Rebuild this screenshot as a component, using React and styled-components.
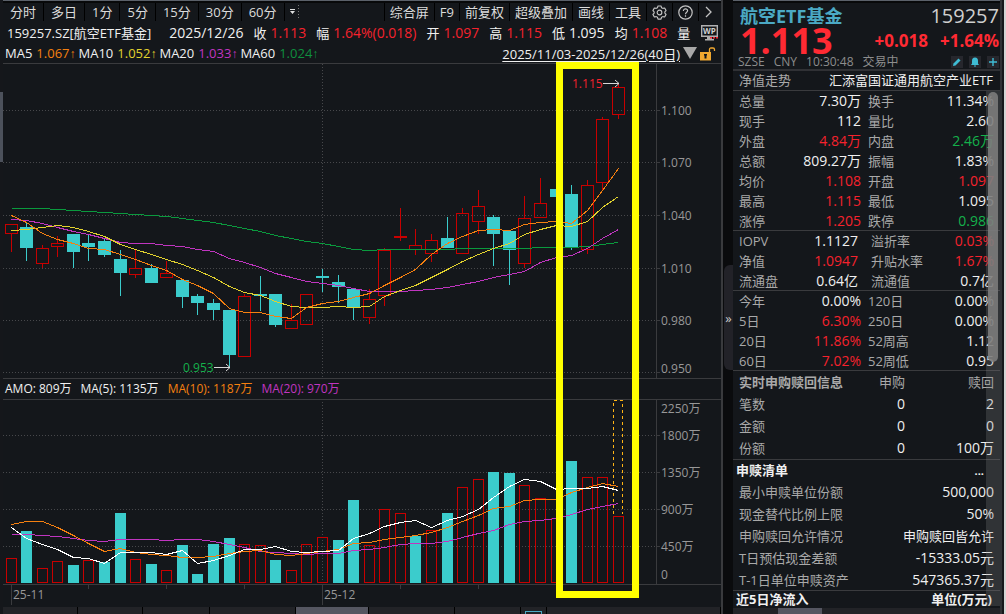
import React from 'react';
import styled, { createGlobalStyle } from 'styled-components';

const RED = '#f5222d';
const GREEN = '#14b14b';
const CYAN = '#3bcccc';
const ORANGE = '#f58010';
const YELLOW = '#e2d22e';
const PURPLE = '#c035c0';
const WHITE = '#f0f0f0';
const GREY = '#a9a9a9';
const LINE = '#3a3b3e';

const GlobalStyle = createGlobalStyle`
  * { box-sizing: border-box; }
  body {
    margin: 0;
    background: #0a0b0d;
    color: ${WHITE};
    font-family: "Open Sans", "Noto Sans CJK SC", sans-serif;
    font-size: 13px;
  }
  button {
    font: inherit;
    color: inherit;
    padding: 0;
    border: 0;
    background: none;
  }
`;

const Page = styled.div`
  display: flex;
  min-height: 100vh;
  overflow: hidden;
`;
const LeftRail = styled.div`
  width: 3px;
  padding-top: 92px;
  background: #15171b;
`;
const RailThumb = styled.div`
  height: 70px;
  background: #4c515b;
`;
const Main = styled.main`
  flex: 1;
  min-width: 0;
  display: flex;
  flex-direction: column;
  background: #14171b;
  border-top: 1px solid #5b616a;
`;
const Toolbar = styled.nav`
  display: flex;
  height: 21px;
  padding-bottom: 1px;
  border-top: 2px solid #08090a;
`;
const ToolGroup = styled.div`
  display: flex;
  margin-left: ${(p) => (p.$end ? 'auto' : '0')};
  padding-right: ${(p) => (p.$end ? 3 : 0)}px;
`;
const ToolButton = styled.button`
  display: flex;
  align-items: center;
  justify-content: center;
  padding: 0 ${(p) => (p.$tight ? 5 : 7)}px;
  line-height: 18px;
  color: #dcdcdc;
  border-left: 1px solid #000;
  white-space: nowrap;
  &:first-child { border-left-width: ${(p) => (p.$tight ? 1 : 0)}px; }
`;
const QuoteLine = styled.div`
  display: flex;
  align-items: center;
  height: 22px;
  padding: 0 3px 0 4px;
  gap: 10px;
  line-height: 22px;
  white-space: nowrap;
`;
const QuoteName = styled.span`
  margin-right: 8px;
`;
const Quote = styled.span`
  display: flex;
  gap: 4px;
`;
const Num = styled.span`
  font-size: 14px;
  color: ${(p) => p.$color || WHITE};
`;
const WpButton = styled.button`
  display: flex;
  margin-left: auto;
`;
const MaLine = styled.div`
  display: flex;
  align-items: center;
  height: 19px;
  padding: 0 5px 0 2px;
  gap: 3px;
  line-height: 19px;
  white-space: nowrap;
`;
const MaItem = styled.span`
  display: flex;
  gap: 4px;
`;
const MaValue = styled.span`
  color: ${(p) => p.$color};
`;
const Arrow = styled.span`
  font-family: "Liberation Sans", sans-serif;
  font-size: 12px;
`;
const RangeButton = styled.button`
  margin-left: auto;
  line-height: 16px;
  text-decoration: underline;
  text-underline-offset: 2px;
`;
const Charts = styled.section`
  position: relative;
`;
const Plot = styled.svg`
  display: block;
  width: 100%;
  height: auto;
`;
const AmoLine = styled.div`
  display: flex;
  height: 20px;
  padding-left: 2px;
  gap: 9px;
  font-size: 12px;
  line-height: 20px;
  white-space: nowrap;
`;
const Highlight = styled.div`
  position: absolute;
  top: -1px;
  bottom: 9px;
  left: 77%;
  width: 83px;
  border: 7px solid #ffff00;
`;
const Tabs = styled.div`
  display: flex;
  flex: 1;
  min-height: 7px;
  background: #222327;
`;
const Tab = styled.div`
  flex: ${(p) => p.$size};
  display: flex;
  justify-content: center;
  padding-top: 4px;
  background: ${(p) => (p.$active ? '#555661' : '#222327')};
  border-right: 1px solid #000;
`;
const TabIcon = styled.span`
  width: 17px;
  border: 1px solid #4ba9c4;
  border-bottom: 0;
`;

const Splitter = styled.div`
  width: 12px;
  display: flex;
  padding-top: 265px;
  padding-left: 1px;
  background: #0a0b0d;
  border-left: 2px solid #393a3d;
`;
const Collapse = styled.button`
  width: 100%;
  height: 105px;
  background: #222228;
  color: #c8c8c8;
  border-radius: 6px 0 0 6px;
  line-height: 104px;
`;

const Side = styled.aside`
  width: 267px;
  display: flex;
  flex-direction: column;
  background: #14171b;
  border-top: 1px solid #5b616a;
`;
const SideHead = styled.header`
  height: 70px;
  padding: 2px 1px 0 7px;
  border-top: 2px solid #08090a;
  border-bottom: 2px solid #303135;
  white-space: nowrap;
`;
const HeadRow = styled.div`
  display: flex;
  justify-content: space-between;
  align-items: center;
  height: ${(p) => p.$h}px;
  line-height: ${(p) => p.$h}px;
`;
const Name = styled.h1`
  margin: 0;
  font-size: 18px;
  color: #4ba9c4;
`;
const Code = styled.span`
  font-size: 20px;
  color: #cfcfcf;
`;
const Price = styled.strong`
  font-size: 36px;
  color: #ff2a33;
`;
const Changes = styled.strong`
  display: flex;
  gap: 12px;
  font-size: 17px;
  color: #ff2a33;
`;
const Status = styled.span`
  display: flex;
  gap: 9px;
  margin-left: -2px;
  font-size: 12px;
  color: #8d8d8d;
`;
const Actions = styled.span`
  display: flex;
  gap: 6px;
`;
const ActionButton = styled.button`
  display: flex;
  width: 12px;
  height: 12px;
  background: #26272d;
`;
const SideBody = styled.div`
  position: relative;
`;
const TrendRow = styled.div`
  display: flex;
  justify-content: space-between;
  height: 20px;
  padding: 0 7px 0 6px;
  line-height: 19px;
  color: ${WHITE};
  border-bottom: 1px solid ${LINE};
  white-space: nowrap;
`;
const Label = styled.span`
  color: ${GREY};
`;
const Section = styled.section`
  padding: 0 6px;
  border-bottom: ${(p) => (p.$last ? 0 : 1)}px solid ${LINE};
`;
const SectionTitle = styled.h2`
  display: flex;
  justify-content: space-between;
  margin: 0 0 0 -3px;
  padding-right: ${(p) => p.$inset || 0}px;
  font-size: 13px;
  line-height: ${(p) => p.$h || 20}px;
`;
const Dots = styled.button`
  font-size: 11px;
  line-height: 18px;
`;
const DataTable = styled.table`
  width: 100%;
  table-layout: ${(p) => (p.$auto ? 'auto' : 'fixed')};
  border-spacing: 0;
  white-space: nowrap;
  tr { height: ${(p) => p.$row}px; }
  tr:last-child { height: ${(p) => p.$lastRow || p.$row}px; }
`;
const Th = styled.th`
  width: ${(p) => (p.$w ? p.$w + 'px' : 'auto')};
  padding: 0 0 0 ${(p) => p.$indent || 0}px;
  text-align: ${(p) => (p.$right ? 'right' : 'left')};
  font-weight: ${(p) => (p.$bold ? 700 : 400)};
  line-height: 18px;
  color: ${GREY};
`;
const Td = styled.td`
  width: ${(p) => (p.$w ? p.$w + 'px' : 'auto')};
  padding: 0 ${(p) => p.$inset || 0}px 0 0;
  text-align: right;
  font-size: 14px;
  line-height: 18px;
  color: ${(p) => p.$color || WHITE};
`;
const CjkTd = styled(Td)`
  font-size: 13px;
`;
const Track = styled.div`
  position: absolute;
  top: 20px;
  right: 0;
  bottom: 2px;
  width: 14px;
  padding: 1px 2px;
  background: rgba(130, 130, 130, 0.26);
`;
const Thumb = styled.div`
  height: 270px;
  border-radius: 5px;
  background: rgba(125, 125, 125, 0.88);
`;
const SideFoot = styled.div`
  flex: 1;
  min-height: 7px;
  padding-left: 45px;
  background: #222327;
`;
const FootThumb = styled.div`
  width: 44px;
  height: 100%;
  background: #555661;
`;
const Edge = styled.div`
  width: 6px;
  background: #17181b;
  border-left: 2px solid #303135;
  border-right: 2px solid #d4d4d4;
`;

// x centre of the i-th trading day
const cx = (i) => Math.floor(11.1 + 15.57 * i) + 0.5;

// high, body top, body bottom, low, rising
const candles = [
  [224, 224, 234, 252, 1], [223, 227, 248, 261, 0], [245, 248, 264, 268, 1], [236, 243, 247, 257, 1],
  [234, 234, 252, 268, 0], [235, 243, 247, 261, 0], [238, 241, 255, 257, 0], [250, 259, 273, 296, 0],
  [250, 268, 275, 278, 1], [264, 268, 283, 283, 0], [261, 273, 278, 278, 1], [280, 280, 297, 308, 0],
  [294, 296, 303, 315, 0], [299, 303, 310, 320, 0], [310, 310, 355, 368, 0], [294, 296, 357, 357, 1],
  [276, 294, 296, 311, 0], [294, 294, 325, 327, 0], [304, 320, 329, 329, 1], [294, 294, 325, 325, 1],
  [269, 276, 278, 292, 0], [275, 282, 287, 303, 0], [289, 289, 308, 320, 0], [289, 299, 318, 324, 1],
  [248, 250, 296, 306, 1], [208, 236, 238, 241, 1], [229, 245, 250, 255, 1], [234, 240, 254, 262, 1],
  [217, 238, 248, 248, 0], [208, 213, 254, 254, 1], [190, 206, 222, 234, 1], [215, 217, 234, 266, 0],
  [231, 231, 250, 285, 0], [196, 218, 264, 268, 1], [178, 203, 218, 218, 1], [189, 189, 197, 197, 0],
  [185, 194, 248, 250, 0], [180, 185, 250, 254, 1], [117, 119, 183, 191, 1], [84, 87, 115, 119, 1],
];

const priceLines = [
  ['#0a9a3e', [208, 208, 208, 209, 210, 211, 212, 213, 214, 215, 216, 218, 220, 222, 225, 228, 231, 235, 238, 241, 243, 246, 249, 250, 249, 249, 249, 249, 249, 248, 248, 248, 248, 248, 247, 247, 247, 246, 244, 242]],
  [PURPLE, [219, 220, 223, 227, 231, 234, 238, 242, 243, 243, 245, 246, 249, 251, 258, 262, 267, 273, 277, 281, 283, 285, 288, 291, 291, 291, 290, 289, 287, 284, 281, 277, 274, 271, 262, 257, 255, 248, 238, 229]],
  [YELLOW, [230, 229, 227, 225, 227, 231, 236, 244, 249, 254, 259, 264, 270, 277, 286, 292, 295, 301, 306, 307, 307, 306, 307, 306, 296, 290, 285, 277, 269, 261, 254, 248, 243, 234, 229, 225, 226, 221, 207, 196]],
  [ORANGE, [215, 222, 233, 239, 243, 248, 249, 254, 259, 265, 270, 279, 285, 293, 308, 312, 312, 316, 318, 307, 303, 301, 297, 293, 285, 277, 269, 254, 243, 236, 230, 229, 230, 224, 222, 221, 223, 210, 190, 168]],
];

// bar top, rising
const volumes = [
  [558, 1], [531, 0], [568, 1], [561, 1], [565, 0], [560, 1], [562, 0], [513, 0], [559, 1], [564, 0],
  [570, 1], [545, 0], [574, 0], [544, 0], [538, 0], [544, 1], [545, 1], [560, 0], [570, 1], [544, 1],
  [537, 1], [540, 0], [500, 0], [545, 1], [509, 1], [513, 1], [536, 0], [530, 1], [513, 0], [487, 1],
  [479, 1], [472, 0], [473, 0], [485, 1], [498, 1], [518, 1], [461, 0], [477, 1], [477, 1], [516, 1],
];

const volumeLines = [
  [PURPLE, [534, 534, 535, 536, 538, 540, 541, 539, 539, 539, 540, 539, 539, 541, 544, 547, 551, 552, 553, 554, 553, 553, 550, 549, 547, 544, 543, 543, 541, 537, 533, 530, 524, 521, 520, 518, 514, 509, 506, 503]],
  [ORANGE, [524, 521, 521, 527, 535, 543, 551, 548, 552, 554, 555, 557, 557, 556, 553, 551, 550, 554, 555, 553, 551, 549, 543, 542, 539, 537, 535, 532, 527, 521, 515, 508, 506, 500, 499, 499, 492, 487, 483, 486]],
  ['#ffffff', [527, 538, 544, 549, 557, 558, 563, 552, 552, 552, 554, 550, 563, 560, 555, 549, 549, 546, 551, 552, 551, 550, 538, 533, 526, 522, 520, 527, 520, 516, 509, 497, 486, 479, 481, 489, 488, 488, 486, 490]],
];

const points = (ys) => ys.map((y, i) => `${cx(i)},${y + 0.5}`).join(' ');

const Lines = ({ data }) =>
  data.map(([color, ys], i) => (
    <polyline key={i} points={points(ys)} fill="none" stroke={color} shapeRendering="crispEdges" />
  ));

const Grid = ({ ys }) =>
  ys.map((y) => (
    <g key={y} shapeRendering="crispEdges">
      <line x1="3" x2="656" y1={y} y2={y} stroke="#47484b" strokeDasharray="1 2" />
      <line x1="656" x2="660" y1={y} y2={y} stroke={LINE} />
    </g>
  ));

const AxisText = ({ items }) =>
  items.map(([text, y]) => (
    <text key={text} x="661" y={y + 4} fontSize="12" fill="#989898">{text}</text>
  ));

function Candle({ i, data }) {
  const [high, top, bottom, low, up] = data;
  const x = cx(i);
  const color = up ? '#c80000' : CYAN;
  return (
    <g stroke={color} shapeRendering="crispEdges">
      {high < top && <line x1={x} x2={x} y1={high} y2={top} />}
      {low > bottom && <line x1={x} x2={x} y1={bottom} y2={low} />}
      {up
        ? <rect x={x - 6} y={top + 0.5} width="12" height={Math.max(bottom - top - 1, 1)} fill="none" />
        : <rect x={x - 6.5} y={top} width="13" height={bottom - top} fill={CYAN} stroke="none" />}
    </g>
  );
}

function PriceChart() {
  return (
    <Plot viewBox="3 63 718 316" role="img" aria-label="日K线">
      <Grid ys={[110.5, 162.5, 215.5, 268.5, 320.5, 372.5]} />
      <g shapeRendering="crispEdges" stroke={LINE}>
        <line x1="3" x2="721" y1="63.5" y2="63.5" />
        <line x1="3" x2="721" y1="378.5" y2="378.5" />
        <line x1="656.5" x2="656.5" y1="63" y2="378" />
        <line x1="322.5" x2="322.5" y1="64" y2="378" stroke="#47484b" strokeDasharray="1 2" />
      </g>
      {candles.map((c, i) => <Candle key={i} i={i} data={c} />)}
      <Lines data={priceLines} />
      <AxisText items={[['1.100', 111], ['1.070', 163], ['1.040', 216], ['1.010', 269], ['0.980', 321], ['0.950', 369]]} />
      <text x="572" y="88" fontSize="12" fill={RED}>1.115</text>
      <path d="M603 83.5H619M615 80l4 3.5l-4 3.5" fill="none" stroke="#d8d8d8" />
      <text x="183" y="372" fontSize="12" fill={GREEN}>0.953</text>
      <path d="M214 367.5H230M226 364l4 3.5l-4 3.5" fill="none" stroke="#d8d8d8" />
    </Plot>
  );
}

function VolumeChart() {
  return (
    <Plot viewBox="3 399 718 208" role="img" aria-label="成交额">
      <Grid ys={[435.5, 472.5, 509.5, 546.5]} />
      <g shapeRendering="crispEdges" stroke={LINE}>
        <line x1="3" x2="721" y1="399.5" y2="399.5" />
        <line x1="3" x2="721" y1="584.5" y2="584.5" />
        <line x1="656.5" x2="656.5" y1="400" y2="584" />
        <line x1="322.5" x2="322.5" y1="402" y2="584" stroke="#47484b" strokeDasharray="1 2" />
        {[0, 20].map((i) => <line key={i} x1={cx(i)} x2={cx(i)} y1="585" y2="605" />)}
        {[5, 10, 15, 25, 30].map((i) => <line key={i} x1={cx(i)} x2={cx(i)} y1="585" y2="589" />)}
      </g>
      <g shapeRendering="crispEdges">
        {volumes.map(([top, up], i) => (up
          ? <rect key={i} x={cx(i) - 5} y={top + 0.5} width="10" height={582 - top} fill="none" stroke="#c80000" />
          : <rect key={i} x={cx(i) - 5.5} y={top} width="11" height={583 - top} fill={CYAN} />
        ))}
        <path d="M613.5 514V400.5H622.5V514" fill="none" stroke="#ffb414" strokeDasharray="3 3" />
      </g>
      <Lines data={volumeLines} />
      <AxisText items={[['2250万', 409], ['1800万', 436], ['1350万', 473], ['900万', 510], ['450万', 547], ['0', 575]]} />
      <text x="13" y="599" fontSize="12" fill="#989898">25-11</text>
      <text x="324" y="599" fontSize="12" fill="#989898">25-12</text>
    </Plot>
  );
}

const GearIcon = () => (
  <svg width="15" height="15" viewBox="0 0 16 16" fill="none" stroke="#c4c4c4" strokeWidth="1.2" strokeLinejoin="round">
    <path d="M6.4 1h3.2l.6 1.9 1.3.7 2-.4L15 6l-1.3 1.4v1.2L15 10l-1.5 2.800-2-.4-1.300.7L9.600 15H6.400l-.6-1.900-1.300-.7-2 .4L1 10l1.300-1.400V7.400L1 6l1.500-2.800 2 .4 1.300-.7z" />
    <circle cx="8" cy="8" r="2.5" />
  </svg>
);
const HelpIcon = () => (
  <svg width="15" height="15" viewBox="0 0 15 15" fill="none" stroke="#c4c4c4" strokeWidth="1.2">
    <circle cx="7.5" cy="7.5" r="6.7" />
    <path d="M5.400 6c0-3 4.300-2.700 4.200-.2C9.500 7.300 7.500 7.300 7.500 9.200M7.500 10.300v1.500" />
  </svg>
);
const MoreIcon = () => (
  <svg width="9" height="12" viewBox="0 0 9 12" fill="none" stroke="#c4c4c4" strokeWidth="1.3">
    <path d="M2 1l5 5-5 5" />
  </svg>
);
const DropIcon = () => (
  <svg width="10" height="14" viewBox="0 0 10 14" fill="#e0e0e0">
    <path d="M0 4h5v1H0zM0 6h5L2.500 9z" />
    <path d="M8 0h1v1H8zM8 3h1v1H8zM8 6h1v1H8zM8 9h1v1H8zM8 12h1v1H8z" fill="#777777" />
  </svg>
);
const WpIcon = () => (
  <svg width="17" height="16" viewBox="0 0 17 16">
    <path d="M.7.700h15.600v10.600H.7z" fill="none" stroke="#b0b0b0" strokeWidth="1.4" />
    <path d="M6 12h5v2h2v1.500H4V14h2z" fill="#b0b0b0" />
    <text x="8.5" y="9" fontSize="8" fontWeight="700" textAnchor="middle" fill="#d0d0d0">WP</text>
    <path d="M9 12h2v1.500H9zM12 12h2v1.500h-2zM15 12h2v1.500h-2z" fill={RED} />
  </svg>
);
const TriangleIcon = () => (
  <svg width="14" height="13" viewBox="0 0 14 13">
    <path d="M0 0h14L7 12z" fill="#a8a8a8" />
  </svg>
);
const LockIcon = () => (
  <svg width="16" height="14" viewBox="0 0 16 14">
    <path d="M9.500 5V2.500Q9.500 1 11 1h2q1.500 0 1.500 1.500V4" fill="none" stroke="#f0a830" strokeWidth="1.3" />
    <path d="M0 5h11v8.500H0z" fill="#f0a830" />
    <path d="M4 7h3v1.500H6.500v3h-2v-3H4z" fill="#14171b" />
  </svg>
);

const actionIcons = [
  ['编辑', 'M2 10l.5-2.500L7.500 2.500 9.500 4.500 4.500 9.500z'],
  ['提醒', 'M6 1.500C3.800 1.500 3 3 3 5v2.500L2 9h8L9 7.500V5c0-2-.8-3.500-3-3.500zM5 9.500h2v1H5z'],
  ['添加', 'M5.300 2h1.400v3.300H10v1.400H6.700V10H5.300V6.700H2V5.300h3.300z'],
];

const periods = ['分时', '多日', '1分', '5分', '15分', '30分', '60分'];
const tools = ['综合屏', 'F9', '前复权', '超级叠加', '画线', '工具'];

const quotes = [
  ['收', '1.113', RED],
  ['幅', '1.64%(0.018)', RED],
  ['开', '1.097', RED],
  ['高', '1.115', RED],
  ['低', '1.095', WHITE],
  ['均', '1.108', RED],
];

const averages = [
  ['MA5', '1.067', ORANGE],
  ['MA10', '1.052', YELLOW],
  ['MA20', '1.033', PURPLE],
  ['MA60', '1.024', '#0f8f3f'],
];

const trading = [
  ['总量', '7.30万', WHITE, '换手', '11.34%', WHITE],
  ['现手', '112', WHITE, '量比', '2.60', WHITE],
  ['外盘', '4.84万', RED, '内盘', '2.46万', GREEN],
  ['总额', '809.27万', WHITE, '振幅', '1.83%', WHITE],
  ['均价', '1.108', RED, '开盘', '1.097', RED],
  ['最高', '1.115', RED, '最低', '1.095', WHITE],
  ['涨停', '1.205', RED, '跌停', '0.986', GREEN],
];
const netValue = [
  ['IOPV', '1.1127', WHITE, '溢折率', '0.03%', RED],
  ['净值', '1.0947', RED, '升贴水率', '1.67%', RED],
  ['流通盘', '0.64亿', WHITE, '流通值', '0.7亿', WHITE],
];
const returns = [
  ['今年', '0.00%', WHITE, '120日', '0.00%', WHITE],
  ['5日', '6.30%', RED, '250日', '0.00%', WHITE],
  ['20日', '11.86%', RED, '52周高', '1.12', WHITE],
  ['60日', '7.02%', RED, '52周低', '0.95', WHITE],
];
const orders = [['笔数', '0', '2'], ['金额', '0', '0'], ['份额', '0', '100万']];
const listing = [
  ['最小申赎单位份额', '500,000'],
  ['现金替代比例上限', '50%'],
  ['申购赎回允许情况', '申购赎回皆允许', true],
  ['T日预估现金差额', '-15333.05元'],
  ['T-1日单位申赎资产', '547365.37元'],
];

const PairTable = ({ rows, inset = 0 }) => (
  <Section>
    <DataTable $row={20} $lastRow={19}>
      <tbody>
        {rows.map(([a, av, ac, b, bv, bc]) => (
          <tr key={a}>
            <Th scope="row" $w={46}>{a}</Th>
            <Td $w={76} $color={ac} $inset={inset}>{av}</Td>
            <Th scope="row" $w={66} $indent={7 + inset}>{b}</Th>
            <Td $color={bc}>{bv}</Td>
          </tr>
        ))}
      </tbody>
    </DataTable>
  </Section>
);

function SidePanel() {
  return (
    <Side>
      <SideHead>
        <HeadRow $h={22}>
          <Name>航空ETF基金</Name>
          <Code>159257</Code>
        </HeadRow>
        <HeadRow $h={28}>
          <Price>1.113</Price>
          <Changes><span>+0.018</span><span>+1.64%</span></Changes>
        </HeadRow>
        <HeadRow $h={14}>
          <Status><span>SZSE</span><span>CNY</span><span>10:30:48</span><span>交易中</span></Status>
          <Actions>
            {actionIcons.map(([label, d]) => (
              <ActionButton key={label} aria-label={label}>
                <svg width="12" height="12" viewBox="0 0 12 12" fill="#3fbcd4"><path d={d} /></svg>
              </ActionButton>
            ))}
          </Actions>
        </HeadRow>
      </SideHead>
      <SideBody>
        <TrendRow><Label>净值走势</Label><span>汇添富国证通用航空产业ETF</span></TrendRow>
        <PairTable rows={trading} />
        <PairTable rows={netValue} inset={3} />
        <PairTable rows={returns} />
        <Section>
          <DataTable $row={22}>
            <thead>
              <tr>
                <Th scope="col" $w={120} $bold>实时申购赎回信息</Th>
                <Th scope="col" $w={46} $right>申购</Th>
                <Th scope="col" $right>赎回</Th>
              </tr>
            </thead>
            <tbody>
              {orders.map(([label, buy, redeem]) => (
                <tr key={label}>
                  <Th scope="row">{label}</Th>
                  <Td>{buy}</Td>
                  <Td>{redeem}</Td>
                </tr>
              ))}
            </tbody>
          </DataTable>
        </Section>
        <Section>
          <SectionTitle $h={21} $inset={10}><span>申赎清单</span><Dots aria-label="更多">...</Dots></SectionTitle>
          <DataTable $row={22} $lastRow={21} $auto>
            <tbody>
              {listing.map(([label, value, cjk]) => (
                <tr key={label}>
                  <Th scope="row">{label}</Th>
                  {cjk ? <CjkTd>{value}</CjkTd> : <Td>{value}</Td>}
                </tr>
              ))}
            </tbody>
          </DataTable>
        </Section>
        <Section $last>
          <SectionTitle $h={17} $inset={2}><span>近5日净流入</span><span>单位(万元)</span></SectionTitle>
        </Section>
        <Track><Thumb /></Track>
      </SideBody>
      <SideFoot><FootThumb /></SideFoot>
    </Side>
  );
}

export default function App() {
  return (
    <Page>
      <GlobalStyle />
      <LeftRail><RailThumb /></LeftRail>
      <Main>
        <Toolbar>
          <ToolGroup>
            {periods.map((p) => <ToolButton key={p}>{p}</ToolButton>)}
            <ToolButton $tight aria-label="更多周期"><DropIcon /></ToolButton>
          </ToolGroup>
          <ToolGroup $end>
            {tools.map((t) => <ToolButton key={t} $tight>{t}</ToolButton>)}
            <ToolButton $tight aria-label="设置"><GearIcon /></ToolButton>
            <ToolButton $tight aria-label="帮助"><HelpIcon /></ToolButton>
            <ToolButton $tight aria-label="展开"><MoreIcon /></ToolButton>
          </ToolGroup>
        </Toolbar>
        <QuoteLine>
          <QuoteName>159257.SZ[航空ETF基金]</QuoteName>
          <Num>2025/12/26</Num>
          {quotes.map(([label, value, color]) => (
            <Quote key={label}><span>{label}</span><Num $color={color}>{value}</Num></Quote>
          ))}
          <span>量</span>
          <WpButton aria-label="WP"><WpIcon /></WpButton>
        </QuoteLine>
        <MaLine>
          {averages.map(([label, value, color]) => (
            <MaItem key={label}>
              <span>{label}</span>
              <MaValue $color={color}>{value}<Arrow>↑</Arrow></MaValue>
            </MaItem>
          ))}
          <RangeButton>2025/11/03-2025/12/26(40日)</RangeButton>
          <TriangleIcon />
          <LockIcon />
        </MaLine>
        <Charts>
          <PriceChart />
          <AmoLine>
            <span>AMO: 809万</span>
            <span>MA(5): 1135万</span>
            <MaValue $color={ORANGE}>MA(10): 1187万</MaValue>
            <MaValue $color={PURPLE}>MA(20): 970万</MaValue>
          </AmoLine>
          <VolumeChart />
          <Highlight />
        </Charts>
        <Tabs>
          <Tab $size={75} />
          <Tab $size={65} />
          <Tab $size={67} />
          <Tab $size={86} />
          <Tab $size={73} $active />
          <Tab $size={86} />
          <Tab $size={65} />
          <Tab $size={26}><TabIcon /></Tab>
          <Tab $size={175} />
        </Tabs>
      </Main>
      <Splitter><Collapse aria-label="收起侧栏">»</Collapse></Splitter>
      <SidePanel />
      <Edge />
    </Page>
  );
}
